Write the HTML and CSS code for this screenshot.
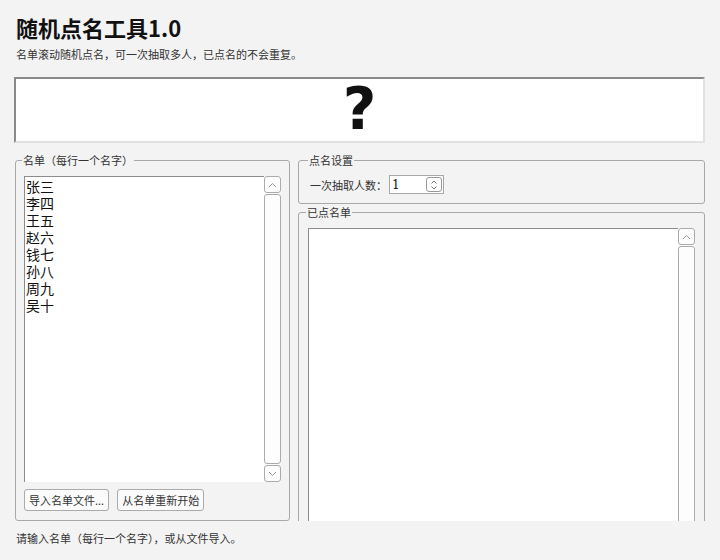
FILE: index.html
```html
<!DOCTYPE html>
<html lang="zh">
<head>
	<meta charset="utf-8" />
	<title>随机点名工具1.0</title>
	<link rel="stylesheet" href="styles.css">
</head>
<body>
	<div class="window">
		<h1 class="title">随机点名工具1.0</h1>
		<p class="subtitle">名单滚动随机点名，可一次抽取多人，已点名的不会重复。</p>

		<div class="display">?</div>

		<div class="panels">
			<fieldset class="group group-names">
				<legend>名单（每行一个名字）</legend>
				<div class="listbox names">
					<div class="list-text">张三<br>李四<br>王五<br>赵六<br>钱七<br>孙八<br>周九<br>吴十</div>
					<div class="scrollbar">
						<div class="scroll-btn">
							<svg width="9" height="6" viewBox="0 0 9 6"><polyline points="1,5 4.5,1.5 8,5" fill="none" stroke="#999" stroke-width="1"/></svg>
						</div>
						<div class="scroll-track"></div>
						<div class="scroll-btn">
							<svg width="9" height="6" viewBox="0 0 9 6"><polyline points="1,1 4.5,4.5 8,1" fill="none" stroke="#999" stroke-width="1"/></svg>
						</div>
					</div>
				</div>
				<div class="buttons">
					<button class="btn">导入名单文件...</button>
					<button class="btn">从名单重新开始</button>
				</div>
			</fieldset>

			<div class="right-column">
				<fieldset class="group group-settings">
					<legend>点名设置</legend>
					<div class="setting-row">
						<span class="setting-label">一次抽取人数：</span>
						<div class="spinbox">
							<span class="spin-value">1</span>
							<div class="spin-arrows">
								<svg width="14" height="6" viewBox="0 0 14 6"><polyline points="4.5,4.5 7,2 9.5,4.5" fill="none" stroke="#777" stroke-width="1"/></svg>
								<svg width="14" height="6" viewBox="0 0 14 6"><polyline points="4.5,1.5 7,4 9.5,1.5" fill="none" stroke="#777" stroke-width="1"/></svg>
							</div>
						</div>
					</div>
				</fieldset>

				<fieldset class="group group-called">
					<legend>已点名单</legend>
					<div class="listbox called">
						<div class="list-text"></div>
						<div class="scrollbar">
							<div class="scroll-btn">
								<svg width="9" height="6" viewBox="0 0 9 6"><polyline points="1,5 4.5,1.5 8,5" fill="none" stroke="#999" stroke-width="1"/></svg>
							</div>
							<div class="scroll-track"></div>
						</div>
					</div>
				</fieldset>
			</div>
		</div>
	</div>
	<p class="status">请输入名单（每行一个名字），或从文件导入。</p>
</body>
</html>
```

FILE: styles.css
```css
body{
	margin: 0;
	background-color: #f3f3f3;
	font-family: "Noto Sans CJK SC", "DejaVu Sans", sans-serif;
	font-size: 11px;
	color: #333;
}

.window{
	height: 521px;
	overflow: hidden;
	padding: 0 15px 0 14px;
}

.title{
	margin: 0;
	padding-top: 13px;
	padding-left: 2px;
	font-size: 22px;
	line-height: 28px;
	font-weight: bold;
	color: #111;
}

.subtitle{
	margin: 4px 0 0 2px;
	line-height: 18px;
}

.display{
	margin-top: 14px;
	height: 62px;
	background: #fff;
	border: 2px solid;
	border-color: #8a8a8a #e2e2e2 #e2e2e2 #8a8a8a;
	text-align: center;
	font-family: "DejaVu Sans", sans-serif;
	font-weight: bold;
	font-size: 58px;
	line-height: 60px;
	color: #111;
}

.panels{
	display: flex;
	gap: 8px;
	margin-top: 10px;
	height: 420px;
	padding-left: 1px;
}

/* Group boxes */
.group{
	margin: 0;
	border: 1px solid #a8a8a8;
	border-radius: 3px;
	padding: 7px 8px 8px 8px;
	min-width: 0;
}

.group legend{
	margin-left: -2px;
	padding: 0 1px;
	font-size: 11px;
	line-height: 14px;
	color: #333;
}

.group-names{
	width: 275px;
	box-sizing: border-box;
	height: 368px;
	display: flex;
	flex-direction: column;
	padding-top: 9px;
}

.right-column{
	flex: 1;
	display: flex;
	flex-direction: column;
	gap: 1px;
}

.group-settings{
	padding: 8px 8px 9px 11px;
}

.group-called{
	flex: 1;
	display: flex;
	flex-direction: column;
	padding: 9px 9px 8px 9px;
}

/* List boxes with fake scrollbars */
.listbox{
	display: flex;
}

.names{
	height: 306px;
}

.called{
	flex: 1;
}

.list-text{
	flex: 1;
	background: #fff;
	border-top: 1px solid #8c8c8c;
	border-left: 1px solid #8c8c8c;
	padding: 1px 1px;
	font-size: 14px;
	line-height: 17px;
	color: #111;
}

.scrollbar{
	width: 17px;
	display: flex;
	flex-direction: column;
	gap: 1px;
	background: #fafafa;
}

.scroll-btn{
	height: 15px;
	border: 1px solid #ababab;
	border-radius: 3px;
	background: #fdfdfd;
	display: flex;
	align-items: center;
	justify-content: center;
}

.scroll-track{
	flex: 1;
	border: 1px solid #ababab;
	border-radius: 3px;
	background: #fdfdfd;
}

.buttons{
	display: flex;
	gap: 8px;
	margin-top: 7px;
}

.btn{
	height: 22px;
	padding: 0 4px;
	border: 1px solid #ababab;
	border-radius: 3px;
	background: #fbfbfb;
	font-family: inherit;
	font-size: 11px;
	color: #333;
}

/* Settings */
.setting-row{
	display: flex;
	align-items: center;
	gap: 2px;
}

.spinbox{
	width: 55px;
	height: 19px;
	box-sizing: border-box;
	border: 1px solid #a8a8a8;
	background: #fff;
	display: flex;
	align-items: center;
	justify-content: space-between;
	padding: 0 1px 0 2px;
}

.spin-value{
	font-family: "DejaVu Serif", serif;
	font-size: 12px;
	color: #111;
}

.spin-arrows{
	display: flex;
	flex-direction: column;
	justify-content: center;
	border: 1px solid #999;
	border-radius: 3px;
	height: 13px;
	overflow: hidden;
}

.status{
	margin: 9px 0 0 16px;
	line-height: 16px;
}
```
